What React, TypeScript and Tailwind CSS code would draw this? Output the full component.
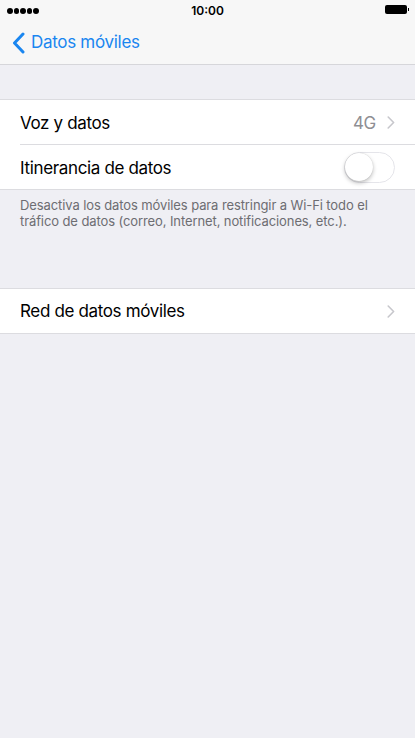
import React from "react";

function Chevron({ className = "" }: { className?: string }) {
  return (
    <svg width="8" height="13" viewBox="0 0 8 13" className={className}>
      <path d="M1.2 1 L6.6 6.5 L1.2 12" fill="none" stroke="#c7c7cc" strokeWidth="1.6" strokeLinecap="round" strokeLinejoin="round" />
    </svg>
  );
}

export default function App() {
  return (
    <div
      className="w-[415px] h-[738px] bg-[#efeff4] flex flex-col"
      style={{ fontFamily: 'Inter, "Noto Sans", sans-serif' }}
    >
      <div className="bg-[#f7f7f7] border-b border-[#d6d6da]">
        <div className="h-[20px] relative flex items-center justify-center">
          <div className="absolute left-[7px] top-[8px] flex gap-[1px]">
            {[0, 1, 2, 3, 4].map((i) => (
              <div key={i} className="w-[5.5px] h-[5.5px] rounded-full bg-black" />
            ))}
          </div>
          <span className="text-[12px] font-semibold text-black leading-none mt-[1px]">10:00</span>
          <div className="absolute right-[6px] top-[5px] flex items-center">
            <div className="w-[22px] h-[9px] rounded-[2px] bg-black" />
            <div className="w-[1.5px] h-[3px] bg-black ml-[0.5px]" />
          </div>
        </div>
        <div className="h-[44px] flex items-center pl-[12px] pt-[2px]">
          <svg width="13" height="22" viewBox="0 0 13 22">
            <path d="M11 2 L2.5 11 L11 20" fill="none" stroke="#1a86f0" strokeWidth="3" strokeLinecap="round" strokeLinejoin="round" />
          </svg>
          <span className="ml-[6px] text-[17px] text-[#1a86f0] tracking-[-0.3px]">Datos móviles</span>
        </div>
      </div>

      <div className="h-[34px]" />

      <div className="bg-white border-y border-[#dcdce0]">
        <div className="h-[44px] flex items-center pl-[20px] pr-[20px] pt-[3px]">
          <span className="flex-1 text-[17px] text-black tracking-[-0.35px]">Voz y datos</span>
          <span className="text-[17px] text-[#8e8e93] mr-[11px] tracking-[-0.3px]">4G</span>
          <Chevron className="-mt-[2px]" />
        </div>
        <div className="ml-[20px] h-px bg-[#dcdce0]" />
        <div className="h-[44px] flex items-center pl-[20px] pr-[20px]">
          <span className="flex-1 text-[17px] text-black tracking-[-0.35px] pt-[4px]">Itinerancia de datos</span>
          <div className="w-[51px] h-[31px] rounded-full border-[1.5px] border-[#e5e5ea] bg-white relative">
            <div className="absolute left-0 top-0 w-[28px] h-[28px] rounded-full bg-white shadow-[0_2px_4px_rgba(0,0,0,0.25),0_0_1px_rgba(0,0,0,0.2)]" />
          </div>
        </div>
      </div>

      <div className="pl-[20px] pr-[16px] pt-[7px] text-[13px] leading-[16px] text-[#6d6d72] tracking-[-0.1px]">
        Desactiva los datos móviles para restringir a Wi-Fi todo el tráfico de datos (correo, Internet, notificaciones, etc.).
      </div>

      <div className="h-[59px]" />

      <div className="bg-white border-y border-[#dcdce0]">
        <div className="h-[44px] flex items-center pl-[20px] pr-[20px] pt-[2px]">
          <span className="flex-1 text-[17px] text-black tracking-[-0.35px]">Red de datos móviles</span>
          <Chevron className="-mt-[2px]" />
        </div>
      </div>
    </div>
  );
}
